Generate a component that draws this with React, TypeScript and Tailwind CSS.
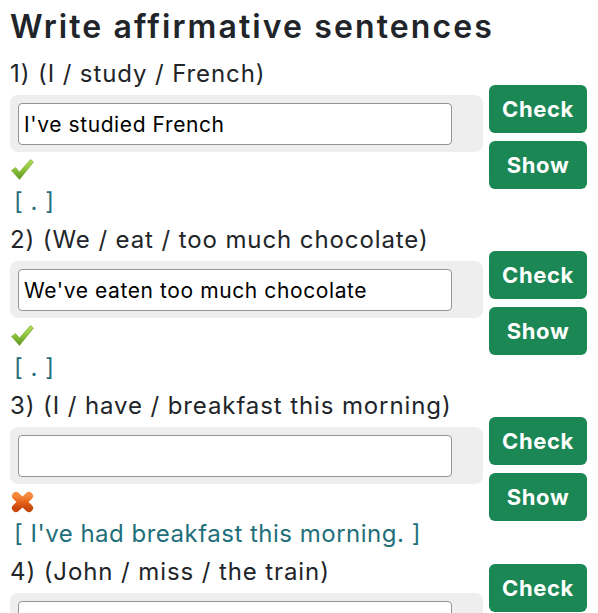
import React from "react";

function CheckIcon() {
  return (
    <svg width="23" height="21" viewBox="0 0 23 21">
      <defs>
        <linearGradient id="cg" x1="0" y1="0" x2="0" y2="1">
          <stop offset="0" stopColor="#b5dc5a" />
          <stop offset="0.5" stopColor="#8cc33a" />
          <stop offset="1" stopColor="#5f9420" />
        </linearGradient>
      </defs>
      <path d="M0.5 11.5 L4.5 8.5 L8.5 13 L19.5 0.5 L22.5 3 L8.5 20.5 Z" fill="url(#cg)" stroke="#6e9f2a" strokeWidth="0.6" strokeLinejoin="round" />
    </svg>
  );
}

function CrossIcon() {
  return (
    <svg width="23" height="22" viewBox="0 0 23 22">
      <defs>
        <linearGradient id="xg" x1="0" y1="0" x2="0" y2="1">
          <stop offset="0" stopColor="#f58a3c" />
          <stop offset="0.5" stopColor="#e8641c" />
          <stop offset="1" stopColor="#c9480c" />
        </linearGradient>
      </defs>
      <g stroke="url(#xg)" strokeWidth="8" strokeLinecap="round">
        <line x1="5" y1="5" x2="18" y2="17" />
        <line x1="18" y1="5" x2="5" y2="17" />
      </g>
    </svg>
  );
}

type Q = {
  n: number;
  prompt: string;
  value: string;
  status?: "ok" | "bad";
  answer?: string;
};

const questions: Q[] = [
  { n: 1, prompt: "(I / study / French)", value: "I've studied French", status: "ok", answer: "[ . ]" },
  { n: 2, prompt: "(We / eat / too much chocolate)", value: "We've eaten too much chocolate", status: "ok", answer: "[ . ]" },
  { n: 3, prompt: "(I / have / breakfast this morning)", value: "", status: "bad", answer: "[ I've had breakfast this morning. ]" },
  { n: 4, prompt: "(John / miss / the train)", value: "" },
];

function Question({ q }: { q: Q }) {
  return (
    <div className="flex items-center">
      <div className="flex w-[473px] flex-col">
        <div className="h-[39px] text-[24px] leading-[36px] tracking-[0.9px] whitespace-nowrap text-[#212529]">
          {q.n}) {q.prompt}
        </div>
        <div className="rounded-lg bg-[#eeeeee] pt-[8px] pb-[7px] pl-2">
          <input
            readOnly
            value={q.value}
            className="block h-[42px] w-[434px] rounded-[4px] border border-[#949494] bg-white px-[5px] text-[21px] tracking-[0.6px] text-black outline-none"
            style={{ fontFamily: "Inter, 'Noto Sans', sans-serif" }}
          />
        </div>
        {q.status ? (
          <>
            <div className="mt-[7px] ml-[1px] h-[22px]">
              {q.status === "ok" ? <CheckIcon /> : <CrossIcon />}
            </div>
            <div className="mt-[4px] h-[37px] pl-[4px] text-[24px] leading-[34px] tracking-[0.5px] text-[#1f6f7b] whitespace-nowrap">
              {q.answer}
            </div>
          </>
        ) : (
          <div className="h-[32px]" />
        )}
      </div>
      <div className="mb-[4px] ml-[6px] flex w-[98px] flex-col gap-2">
        <button className="h-[48px] rounded-md bg-[#1b8754] text-[22px] font-bold tracking-[0.6px] text-white">Check</button>
        <button className="h-[48px] rounded-md bg-[#1b8754] text-[22px] font-bold tracking-[0.6px] text-white">Show</button>
      </div>
    </div>
  );
}

export default function App() {
  return (
    <div
      className="h-[613px] overflow-hidden bg-white px-[10px] text-[#212529]"
      style={{ fontFamily: "Inter, 'Noto Sans', sans-serif" }}
    >
      <h2 className="pt-[7px] pb-[9px] text-[32px] leading-[40px] font-semibold tracking-[2.1px] whitespace-nowrap">
        Write affirmative sentences
      </h2>
      {questions.map((q) => (
        <Question key={q.n} q={q} />
      ))}
    </div>
  );
}
